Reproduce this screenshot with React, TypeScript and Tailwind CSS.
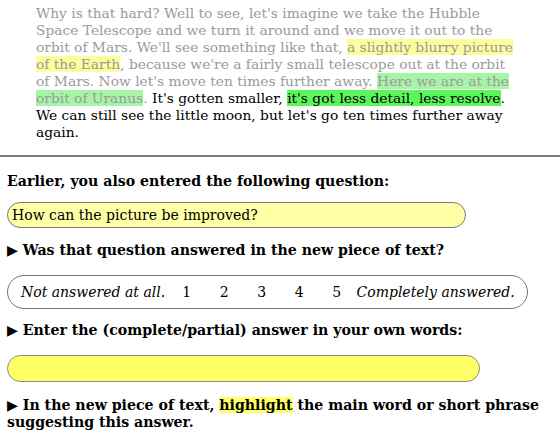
import React from 'react';

const serif = { fontFamily: '"DejaVu Serif", serif' };

const App = () => {
  const ratings = [1, 2, 3, 4, 5];

  return (
    <div className="w-[560px] h-[434px] overflow-hidden bg-white text-[14px] leading-[17px] text-black" style={serif}>
      {/* Transcript paragraph */}
      <p className="ml-[36px] w-[482px] pt-[5px] text-[13.8px]">
        <span className="text-[#9a9a9a]">
          Why is that hard? Well to see, let's imagine we take the Hubble Space Telescope and we turn it around and we move it out to the orbit of Mars. We'll see something like that,{' '}
          <span className="bg-[#fdfd9e]">a slightly blurry picture of the Earth</span>, because we're a fairly small telescope out at the orbit of Mars. Now let's move ten times further away.{' '}
          <span className="bg-[#a6f5a6]">Here we are at the orbit of Uranus</span>.
        </span>{' '}
        It's gotten smaller, <span className="bg-[#5cf55c]">it's got less detail, less resolve</span>. We can still see the little moon, but let's go ten times further away again.
      </p>

      <div className="mt-[14px] h-[2px] bg-[#7a7a7a]" />

      <div className="px-[7px]">
        <h2 className="mt-[16px] text-[14.15px] font-bold">Earlier, you also entered the following question:</h2>

        <div className="mt-[12px] w-[459px] h-[26px] flex items-center rounded-full border border-[#777] bg-[#ffffa6] pl-[4px]">
          How can the picture be improved?
        </div>

        <h2 className="mt-[14px] text-[14.15px] font-bold">▶ Was that question answered in the new piece of text?</h2>

        <div className="mt-[16px] w-[521px] h-[34px] flex items-center rounded-full border border-[#777] bg-white pl-[13px]">
          <span className="w-[147px] whitespace-nowrap italic">Not answered at all.</span>
          {ratings.map((n) => (
            <span key={n} className="w-[37.5px] text-center">
              {n}
            </span>
          ))}
          <span className="ml-[1px] whitespace-nowrap italic">Completely answered.</span>
        </div>

        <h2 className="mt-[13px] text-[14.15px] font-bold">▶ Enter the (complete/partial) answer in your own words:</h2>

        <div className="mt-[16px] w-[473px] h-[27px] rounded-full border border-[#888] bg-[#ffff66]" />

        <h2 className="mt-[15px] text-[14.15px] font-bold">
          ▶ In the new piece of text, <span className="bg-[#ffff66]">highlight</span> the main word or short phrase suggesting this answer.
        </h2>
      </div>
    </div>
  );
};

export default App;
